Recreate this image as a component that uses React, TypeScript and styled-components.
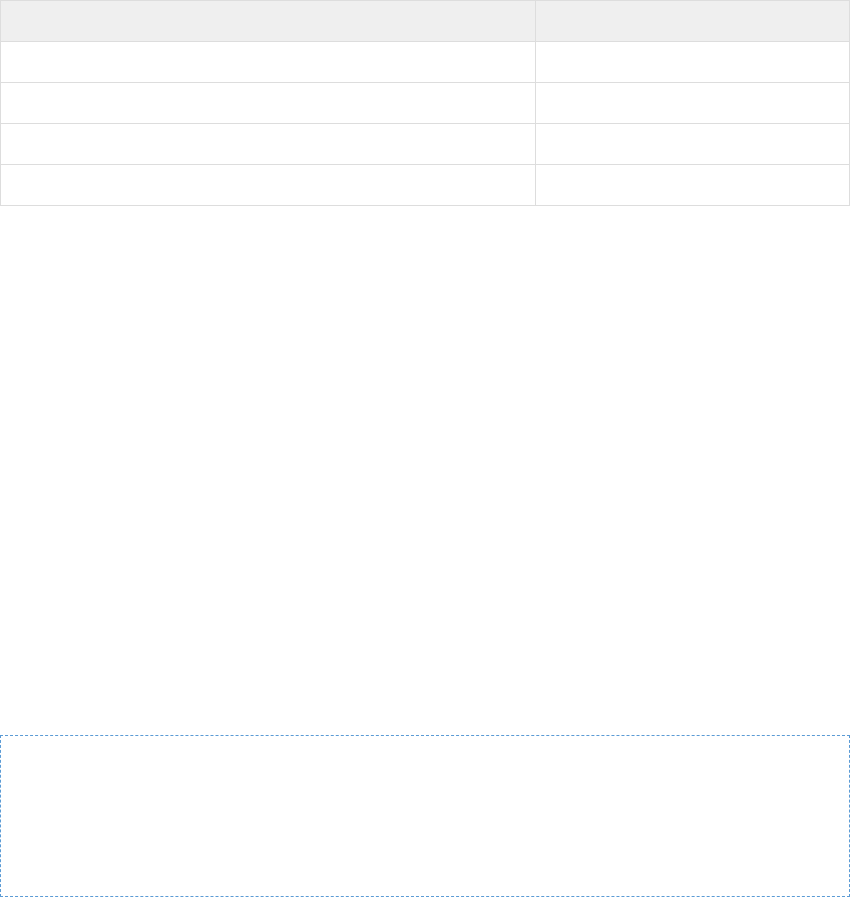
import React from "react";
import styled, { createGlobalStyle } from "styled-components";

const GlobalStyle = createGlobalStyle`
  html, body {
    margin: 0;
    padding: 0;
    background: #fff;
    font-family: "Liberation Sans", Arial, sans-serif;
  }
`;

const Page = styled.div`
  min-height: 100vh;
  display: flex;
  flex-direction: column;
  justify-content: space-between;
  box-sizing: border-box;
`;

const Table = styled.table`
  width: 850px;
  border-collapse: collapse;
  table-layout: fixed;
  font-size: 13px;
  color: #333;
`;

const HeadCell = styled.th<{ $width?: number }>`
  height: 41px;
  padding: 0 12px;
  background: #efefef;
  border: 1px solid #dddddd;
  text-align: left;
  font-weight: 600;
  width: ${({ $width }) => ($width ? `${$width}px` : "auto")};
  box-sizing: border-box;
`;

const Cell = styled.td`
  height: 41px;
  padding: 0 12px;
  border: 1px solid #dddddd;
  box-sizing: border-box;
`;

const DropZone = styled.div`
  height: 162px;
  width: 850px;
  box-sizing: border-box;
  border: 1px dashed #5b9bd5;
`;

const rows = [0, 1, 2, 3];

const App: React.FC = () => {
  return (
    <>
      <GlobalStyle />
      <Page>
        <Table>
          <thead>
            <tr>
              <HeadCell $width={535} />
              <HeadCell />
            </tr>
          </thead>
          <tbody>
            {rows.map((row) => (
              <tr key={row}>
                <Cell />
                <Cell />
              </tr>
            ))}
          </tbody>
        </Table>
        <DropZone />
      </Page>
    </>
  );
};

export default App;
